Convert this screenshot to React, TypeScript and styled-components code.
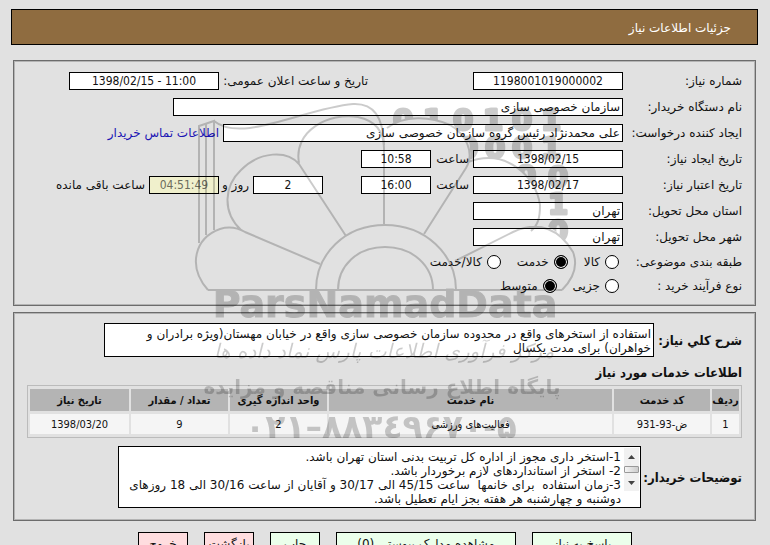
import React from "react";
import styled, { createGlobalStyle } from "styled-components";

const Global = createGlobalStyle`
  *, *::before, *::after { box-sizing: border-box; }
  html, body { margin: 0; height: 100%; overflow: hidden; background: #e1e1e1; }
  body, input, textarea, button {
    font-family: "DejaVu Sans", sans-serif;
    font-size: 12px;
    color: #111;
  }
`;

const Page = styled.main`
  position: relative;
  padding: 9px 12px 0 11px;
`;

const TitleBar = styled.h1`
  margin: 0 0 15px;
  padding: 0 26px;
  height: 36px;
  line-height: 36px;
  border: 1px solid #000;
  background: #8f6c40;
  color: #fff;
  font-size: 12px;
  font-weight: normal;
`;

const Panel = styled.section<{ $top: number; $bottom: number }>`
  margin: 0 2px 6px;
  border: 1px solid #6c6c6c;
  box-shadow: inset 1px 1px #b4b4b4, inset -1px -1px #b4b4b4;
  padding: ${(p) => p.$top}px 13px ${(p) => p.$bottom}px;
`;

const Row = styled.div`
  display: flex;
  align-items: center;
  height: 26px;
  white-space: nowrap;
`;

const Label = styled.label<{ $w: number; $start?: number }>`
  flex: none;
  width: ${(p) => p.$w}px;
  margin-right: ${(p) => p.$start ?? 0}px;
`;

const Unit = styled.span<{ $w?: number }>`
  flex: none;
  width: ${(p) => (p.$w ? p.$w + "px" : "auto")};
  padding-right: 4px;
`;

const Field = styled.input<{ $w: number; $text?: boolean; $timer?: boolean; $start?: number }>`
  flex: none;
  width: ${(p) => p.$w}px;
  height: 18px;
  margin: 0 ${(p) => p.$start ?? 0}px 0 0;
  padding: 0 2px;
  border: 1px solid #000;
  border-radius: 0;
  background: ${(p) => (p.$timer ? "#f0f0cc" : "#fff")};
  color: ${(p) => (p.$timer ? "#6c6c5c" : "#111")};
  font-family: ${(p) => (p.$text ? '"DejaVu Sans"' : '"DejaVu Sans Condensed"')}, sans-serif;
  text-align: ${(p) => (p.$text ? "right" : "center")};
  direction: ${(p) => (p.$text ? "rtl" : "ltr")};
`;

const Contact = styled.a`
  margin-right: 4px;
  color: #1b14b4;
  text-decoration: none;
`;

const Choices = styled.div`
  display: flex;
  align-items: center;
  height: 24px;
`;

const ChoicesTitle = styled.span`
  width: 119px;
`;

const Choice = styled.label`
  display: flex;
  align-items: center;
  gap: 5px;
  margin-right: 4px;
  margin-left: 12px;
`;

const Radio = styled.input`
  appearance: none;
  width: 14px;
  height: 14px;
  margin: 0;
  border: 1px solid #000;
  border-radius: 50%;
  background: #fff;
  &:checked {
    background: #000;
    box-shadow: inset 0 0 0 1px #fff;
  }
`;

const BoldLabel = styled.label<{ $w: number }>`
  flex: none;
  width: ${(p) => p.$w}px;
  font-family: "DejaVu Sans Condensed", sans-serif;
  font-size: 13px;
  font-weight: bold;
  white-space: nowrap;
`;

const Wide = styled.div`
  display: flex;
  align-items: center;
`;

const Summary = styled.textarea`
  display: block;
  width: 550px;
  height: 34px;
  padding: 3px 2px;
  border: 1px solid #000;
  border-radius: 0;
  background: #fff;
  line-height: 14px;
  resize: none;
  overflow: hidden;
`;

const Heading = styled.h2`
  margin: 8px 0 4px;
  font-family: "DejaVu Sans Condensed", sans-serif;
  font-size: 13px;
  line-height: 16px;
  font-weight: bold;
`;

const Table = styled.table`
  width: 100%;
  table-layout: fixed;
  border: 1px solid #bbb;
  border-collapse: separate;
  border-spacing: 2px 3px;
  text-align: center;
  margin-bottom: 8px;
  font-family: "DejaVu Sans Condensed", sans-serif;
  th, td { padding: 0; white-space: nowrap; }
  th { height: 22px; background: #b4b4b4; font-weight: bold; font-size: 11px; }
  td { height: 20px; background: #f5f5f5; font-size: 11px; }
`;

const Col = styled.col<{ $w?: number }>`
  width: ${(p) => (p.$w ? p.$w + "px" : "auto")};
`;

const Notes = styled.div`
  display: flex;
  width: 523px;
  height: 62px;
  padding: 1px;
  border: 1px solid #000;
  background: #fff;
`;

const NotesText = styled.textarea`
  flex: 1;
  margin: 0;
  padding: 2px 3px 0;
  border: 0;
  background: transparent;
  line-height: 14px;
  resize: none;
  overflow: hidden;
`;

const Scroll = styled.div`
  display: flex;
  flex-direction: column;
  justify-content: space-between;
  width: 15px;
  height: 43px;
  background: #f1f1f1;
`;

const Arrow = styled.button`
  width: 15px;
  height: 17px;
  padding: 0;
  border: 0;
  background: transparent;
  line-height: 0;
`;

const Thumb = styled.div`
  height: 7px;
  border: 1px solid #999;
  border-radius: 1px;
  background: linear-gradient(90deg, #f5f5f5, #ccc);
`;

const Actions = styled.div`
  display: flex;
  gap: 16px;
  padding: 5px 126px 0;
`;

const Action = styled.button<{ $w: number; $warm?: boolean }>`
  width: ${(p) => p.$w}px;
  height: 24px;
  padding: 0;
  border: 1px solid #000;
  border-radius: 0;
  background: ${(p) => (p.$warm ? "#ffdddf" : "#ebffeb")};
`;

const Watermark = styled.svg`
  position: absolute;
  top: 90px;
  left: 50%;
  margin-left: -195px;
  pointer-events: none;
  opacity: 0.2;
  font-family: "DejaVu Sans", sans-serif;
`;

const columns = ["ردیف", "کد خدمت", "نام خدمت", "واحد اندازه گیری", "تعداد / مقدار", "تاریخ نیاز"];
const services = [["1", "ض-93-931", "فعالیت‌های ورزشی", "2", "9", "1398/03/20"]];

const summary = "استفاده از استخرهای واقع در محدوده سازمان خصوصی سازی واقع در خیابان مهستان(ویژه برادران و خواهران) برای مدت یکسال";

const notes = `1-استخر داری مجوز از اداره کل تربیت بدنی استان تهران باشد.
2- استخر از استانداردهای لازم برخوردار باشد.
3-زمان استفاده  برای خانمها  ساعت 45/15 الی 30/17 و آقایان از ساعت 30/16 الی 18 روزهای دوشنبه و چهارشنبه هر هفته بجز ایام تعطیل باشد.`;

const digits: [string, number, number][] = [
  ["0", 403, 130], ["1", 433, 130], ["0", 463, 130], ["1", 493, 130], ["0", 522, 130], ["1", 551, 130],
  ["0", 468, 158], ["0", 495, 158], ["0", 522, 158], ["1", 551, 158],
  ["0", 526, 186], ["0", 558, 187], ["1", 558, 214], ["0", 558, 241],
];

const petals =
  "M208 290C187 266 195 238 220 229C230 226 238 228 245 232L320 264" +
  "M241 230C222 212 224 186 241 170C260 151 287 150 299 164L346 236" +
  "M299 163C293 131 329 112 358 117C376 121 384 132 384 148V224" +
  "M387 128C404 115 430 116 450 125C466 134 475 153 466 168L424 234" +
  "M468 162C506 148 536 176 540 205C540 218 538 225 531 231" +
  "M455 261L513 232C540 220 560 230 573 252C579 268 572 280 562 290";

function ChoiceRow({ name, title, options, selected }: { name: string; title: string; options: string[]; selected: string }) {
  return (
    <Choices role="radiogroup" aria-labelledby={name + "-title"}>
      <ChoicesTitle id={name + "-title"}>{title}</ChoicesTitle>
      {options.map((o) => (
        <Choice key={o}>
          <Radio type="radio" name={name} defaultChecked={o === selected} />
          {o}
        </Choice>
      ))}
    </Choices>
  );
}

function Logo() {
  return (
    <Watermark width="400" height="360" viewBox="190 90 400 360" aria-hidden="true">
      <mask id="behind">
        <rect x="190" y="90" width="400" height="360" fill="#fff" />
        <path fill="#000" d="M384 224V140L387 128C404 115 430 116 450 125C466 134 475 153 468 162C506 148 536 176 540 205V224C560 228 575 250 573 270L455 290Z" />
      </mask>
      <g fontSize="29" fontWeight="bold" textAnchor="middle" stroke="#000" strokeWidth="3" strokeLinejoin="round" mask="url(#behind)">
        {digits.map(([d, x, y]) => (
          <text key={d + x + y} x={x} y={y}>{d}</text>
        ))}
      </g>
      <g fill="none" stroke="#000" strokeWidth="2">
        <path d="M208 290H562" />
        <path d="M316 290C316 254 345 225 385 225S456 254 456 290M338 290C338 266 357 247 385 247S433 266 433 290" />
        <path d={petals} />
        <path d="M199 243V126L214 121V230M206 235V124M214 121C242 144 305 108 353 104C374 103 383 117 384 145" />
      </g>
      <g textAnchor="middle" direction="rtl">
        <text x="385" y="317" fontSize="38" fontWeight="bold" direction="ltr" stroke="#000">ParsNamadData</text>
        <text x="384" y="358" fontSize="20" fontStyle="italic">مرکز فرآوری اطلاعات پارس نماد داده ها</text>
        <text x="382" y="394" fontSize="20" fontWeight="bold">پایگاه اطلاع رسانی مناقصه و مزایده</text>
        <text x="381" y="438" fontSize="33" fontWeight="bold" direction="ltr" unicodeBidi="bidi-override">۰۲۱–۸۸۳٤۹۶۷۰-۵</text>
      </g>
    </Watermark>
  );
}

export default function App() {
  return (
    <>
      <Global />
      <Page dir="rtl" lang="fa">
        <TitleBar>جزئیات اطلاعات نیاز</TitleBar>
        <Panel $top={7} $bottom={7}>
          <Row>
            <Label $w={119} htmlFor="number">شماره نیاز:</Label>
            <Field id="number" $w={150} readOnly value="1198001019000002" />
            <Label $start={105} $w={149} htmlFor="announced">تاریخ و ساعت اعلان عمومی:</Label>
            <Field id="announced" $w={150} readOnly value="1398/02/15 - 11:00" />
          </Row>
          <Row>
            <Label $w={119} htmlFor="buyer">نام دستگاه خریدار:</Label>
            <Field id="buyer" $w={450} $text readOnly value="سازمان خصوصی سازی" />
          </Row>
          <Row>
            <Label $w={119} htmlFor="author">ایجاد کننده درخواست:</Label>
            <Field id="author" $w={400} $text readOnly value="علی محمدنژاد رئیس گروه سازمان خصوصی سازی" />
            <Contact href="#contact">اطلاعات تماس خریدار</Contact>
          </Row>
          <Row>
            <Label $w={119} htmlFor="created">تاریخ ایجاد نیاز:</Label>
            <Field id="created" $w={150} readOnly value="1398/02/15" />
            <Unit $w={42}>ساعت</Unit>
            <Field aria-label="ساعت ایجاد" $w={70} readOnly value="10:58" />
          </Row>
          <Row>
            <Label $w={119} htmlFor="expires">تاریخ اعتبار نیاز:</Label>
            <Field id="expires" $w={150} readOnly value="1398/02/17" />
            <Unit $w={42}>ساعت</Unit>
            <Field aria-label="ساعت اعتبار" $w={70} readOnly value="16:00" />
            <Field aria-label="روز" $w={70} $start={38} readOnly value="2" />
            <Unit $w={34}>روز و</Unit>
            <Field aria-label="زمان باقی مانده" $w={70} $timer readOnly value="04:51:49" />
            <Unit>ساعت باقی مانده</Unit>
          </Row>
          <Row>
            <Label $w={119} htmlFor="province">استان محل تحویل:</Label>
            <Field id="province" $w={150} $text readOnly value="تهران" />
          </Row>
          <Row>
            <Label $w={119} htmlFor="city">شهر محل تحویل:</Label>
            <Field id="city" $w={150} $text readOnly value="تهران" />
          </Row>
          <ChoiceRow name="category" title="طبقه بندی موضوعی:" options={["کالا", "خدمت", "کالا/خدمت"]} selected="خدمت" />
          <ChoiceRow name="process" title="نوع فرآیند خرید :" options={["جزیی", "متوسط"]} selected="متوسط" />
        </Panel>
        <Panel $top={10} $bottom={12}>
          <Wide>
            <BoldLabel $w={88} htmlFor="summary">شرح کلي نیاز:</BoldLabel>
            <Summary id="summary" readOnly value={summary} />
          </Wide>
          <Heading>اطلاعات خدمات مورد نیاز</Heading>
          <Table>
            <colgroup>
              <Col $w={27} />
              <Col $w={96} />
              <Col />
              <Col $w={97} />
              <Col $w={97} />
              <Col $w={99} />
            </colgroup>
            <thead>
              <tr>{columns.map((c) => <th key={c} scope="col">{c}</th>)}</tr>
            </thead>
            <tbody>
              {services.map((s) => (
                <tr key={s[0]}>{s.map((v, i) => <td key={i}>{v}</td>)}</tr>
              ))}
            </tbody>
          </Table>
          <Wide>
            <BoldLabel $w={101} htmlFor="notes">توضیحات خریدار:</BoldLabel>
            <Notes>
              <Scroll>
                <Arrow type="button" aria-label="بالا">
                  <svg width="7" height="4" viewBox="0 0 7 4"><path d="M0 4L3.5 0L7 4Z" fill="#444" /></svg>
                </Arrow>
                <Thumb />
                <Arrow type="button" aria-label="پایین">
                  <svg width="7" height="4" viewBox="0 0 7 4"><path d="M0 0H7L3.5 4Z" fill="#444" /></svg>
                </Arrow>
              </Scroll>
              <NotesText id="notes" readOnly value={notes} />
            </Notes>
          </Wide>
        </Panel>
        <Actions>
          <Action type="button" $w={100}>پاسخ به نیاز</Action>
          <Action type="button" $w={180}>مشاهده مدارک پیوستی (0)</Action>
          <Action type="button" $w={50}>چاپ</Action>
          <Action type="button" $w={50} $warm>بازگشت</Action>
          <Action type="button" $w={50} $warm>خروج</Action>
        </Actions>
        <Logo />
      </Page>
    </>
  );
}
